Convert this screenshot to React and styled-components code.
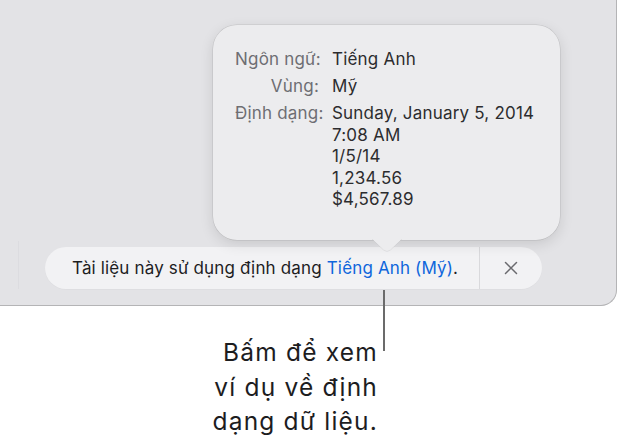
import React from 'react';
import styled, { createGlobalStyle } from 'styled-components';

const colors = {
  windowBg: '#e3e3e6',
  windowEdge: '#b4b4b6',
  pill: '#f2f2f4',
  popover: '#ececee',
  label: '#6e6e73',
  value: '#2c2c2e',
  text: '#1d1d1f',
  link: '#0f66dc',
  leader: '#6b6b6b',
};

const GlobalStyle = createGlobalStyle`
  html, body {
    margin: 0;
    padding: 0;
    background: #ffffff;
  }
  body {
    font-family: Inter, "Noto Sans", "Liberation Sans", sans-serif;
    -webkit-font-smoothing: antialiased;
  }
`;

const Page = styled.div`
  position: relative;
  width: 619px;
  height: 438px;
  overflow: hidden;
`;

// the document window the bar sits in
const Window = styled.div`
  position: relative;
  box-sizing: border-box;
  width: 617px;
  height: 306px;
  background: ${colors.windowBg};
  border-right: 1.5px solid ${colors.windowEdge};
  border-bottom: 1.5px solid ${colors.windowEdge};
  border-bottom-right-radius: 16px;
  display: flex;
  align-items: flex-start;
  padding-top: 247px;
`;

const SideRule = styled.div`
  width: 1px;
  height: 48px;
  margin: -6px 26px 0 18px;
  background: #dcdce0;
`;

const Bar = styled.div`
  display: flex;
  align-items: stretch;
  width: 497px;
  height: 42px;
  border-radius: 21px;
  background: ${colors.pill};
  box-shadow: 0 0.5px 1px rgba(0, 0, 0, 0.04);
`;

const Message = styled.div`
  flex: 1;
  display: flex;
  align-items: center;
  padding-left: 27px;
  font-size: 17px;
  letter-spacing: 0.15px;
  color: ${colors.text};
  white-space: nowrap;
`;

const Link = styled.span`
  color: ${colors.link};
  margin-left: 5px;
`;

const Divider = styled.div`
  width: 1px;
  background: #d9d9dc;
`;

const Close = styled.button`
  width: 62px;
  border: 0;
  padding: 0;
  background: transparent;
  display: flex;
  align-items: center;
  justify-content: center;
  cursor: pointer;
`;

const Popover = styled.div`
  position: absolute;
  left: 213px;
  top: 25px;
  box-sizing: border-box;
  width: 347px;
  height: 215px;
  padding: 24px 0 0 22px;
  border-radius: 24px;
  background: ${colors.popover};
  box-shadow: 0 0 0 0.5px rgba(0, 0, 0, 0.12), 0 4px 14px rgba(0, 0, 0, 0.12);
  display: grid;
  grid-template-columns: 84px auto;
  column-gap: 13px;
  row-gap: 5.5px;
  align-content: start;
  font-size: 17px;
  line-height: 21.5px;
  letter-spacing: 0.2px;
`;

const Arrow = styled.svg`
  position: absolute;
  left: 159px;
  bottom: -13px;
  overflow: visible;
`;

const Label = styled.div`
  text-align: right;
  color: ${colors.label};
  white-space: nowrap;
`;

const Value = styled.div`
  color: ${colors.value};
  white-space: nowrap;
`;

const Leader = styled.div`
  position: absolute;
  left: 383px;
  top: 290px;
  width: 2px;
  height: 61px;
  background: ${colors.leader};
`;

const Callout = styled.div`
  width: 378px;
  margin-top: 29px;
  text-align: right;
  font-size: 24.5px;
  line-height: 34.5px;
  letter-spacing: 1.2px;
  color: ${colors.text};
`;

const rows = [
  { label: 'Ngôn ngữ:', values: ['Tiếng Anh'] },
  { label: 'Vùng:', values: ['Mỹ'] },
  {
    label: 'Định dạng:',
    values: ['Sunday, January 5, 2014', '7:08 AM', '1/5/14', '1,234.56', '$4,567.89'],
  },
];

export default function App() {
  return (
    <>
      <GlobalStyle />
      <Page>
        <Window>
          <SideRule />
          <Bar>
            <Message>
              Tài liệu này sử dụng định dạng<Link>Tiếng Anh (Mỹ)</Link>.
            </Message>
            <Divider />
            <Close aria-label="Đóng">
              <svg width="14" height="14" viewBox="0 0 14 14">
                <path d="M1.5 1.5 L12.5 12.5 M12.5 1.5 L1.5 12.5" stroke="#6a6a6e" strokeWidth="1.5" strokeLinecap="round" />
              </svg>
            </Close>
          </Bar>
          <Popover>
            {rows.map((r) => (
              <React.Fragment key={r.label}>
                <Label>{r.label}</Label>
                <Value>
                  {r.values.map((v) => (
                    <div key={v}>{v}</div>
                  ))}
                </Value>
              </React.Fragment>
            ))}
            <Arrow width="30" height="14" viewBox="0 0 30 14">
              <path d="M0 0 L11.5 11 Q15 14 18.5 11 L30 0 Z" fill={colors.popover} />
              <path d="M0 0 L11.5 11 Q15 14 18.5 11 L30 0" fill="none" stroke="rgba(0,0,0,0.1)" strokeWidth="0.6" />
            </Arrow>
          </Popover>
        </Window>
        <Leader />
        <Callout>
          Bấm để xem
          <br />
          ví dụ về định
          <br />
          dạng dữ liệu.
        </Callout>
      </Page>
    </>
  );
}
